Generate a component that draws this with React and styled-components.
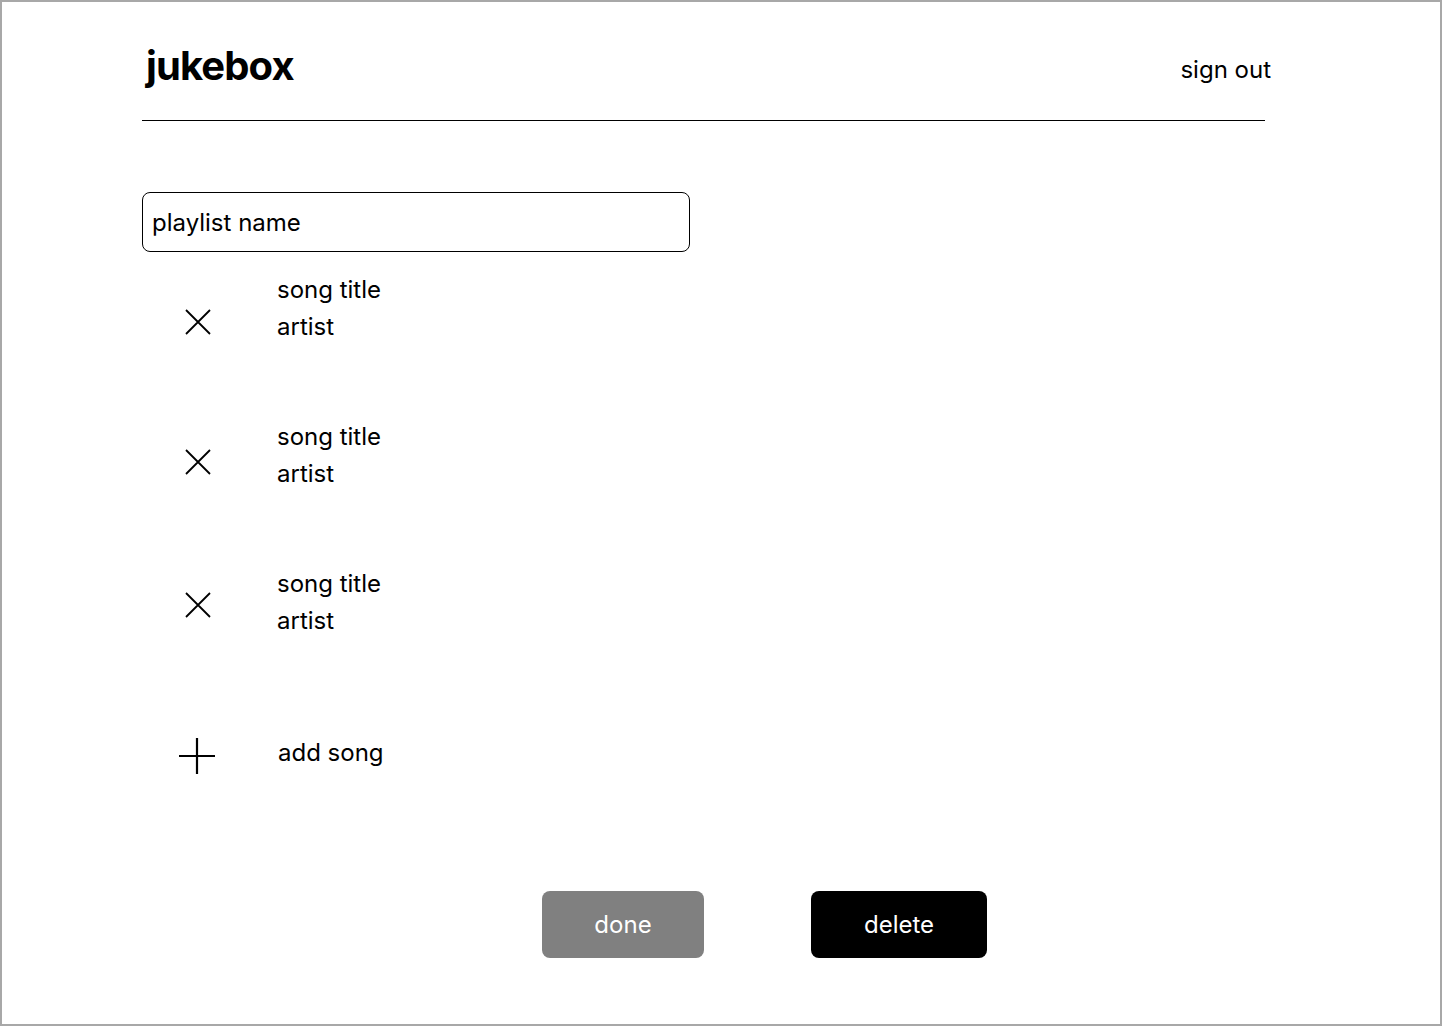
import React from "react";
import styled, { createGlobalStyle } from "styled-components";

const songs = [
  { id: 1, title: "song title", artist: "artist", drop: 38 },
  { id: 2, title: "song title", artist: "artist", drop: 31 },
  { id: 3, title: "song title", artist: "artist", drop: 27 },
];

const CloseIcon = () => (
  <svg width="26" height="26" viewBox="0 0 26 26" fill="none">
    <path d="M1 1L25 25M25 1L1 25" stroke="#000" strokeWidth="1.8" />
  </svg>
);

const PlusIcon = () => (
  <svg width="36" height="36" viewBox="0 0 36 36" fill="none">
    <path d="M18 0V36M0 18H36" stroke="#000" strokeWidth="2.2" />
  </svg>
);

const App = () => {
  return (
    <>
      <GlobalStyle />
      <Frame>
        <Header>
          <Logo>jukebox</Logo>
          <SignOut href="#">sign out</SignOut>
        </Header>
        <Rule />
        <NameInput type="text" defaultValue="playlist name" />
        <SongList>
          {songs.map((song) => (
            <SongRow key={song.id}>
              <RemoveButton type="button" $drop={song.drop} aria-label="remove song">
                <CloseIcon />
              </RemoveButton>
              <SongInfo>
                <SongLine>{song.title}</SongLine>
                <SongLine>{song.artist}</SongLine>
              </SongInfo>
            </SongRow>
          ))}
        </SongList>
        <AddRow>
          <AddIcon>
            <PlusIcon />
          </AddIcon>
          <AddLabel>add song</AddLabel>
        </AddRow>
        <Actions>
          <ActionButton type="button" $tone="#808080" $width={162}>
            done
          </ActionButton>
          <ActionButton type="button" $tone="#000000" $width={176}>
            delete
          </ActionButton>
        </Actions>
      </Frame>
    </>
  );
};

const GlobalStyle = createGlobalStyle`
  * {
    box-sizing: border-box;
  }
  body {
    margin: 0;
    background: #ffffff;
    font-family: Inter, "Liberation Sans", sans-serif;
    color: #000;
  }
`;
const Frame = styled.div`
  width: 1442px;
  height: 1026px;
  border: 2px solid #a8a8a8;
  padding: 40px 0 0 140px;
`;
const Header = styled.header`
  display: flex;
  justify-content: space-between;
  align-items: flex-start;
  width: 1129px;
`;
const Logo = styled.h1`
  margin: 0 0 0 4px;
  font-size: 40px;
  line-height: 48px;
  font-weight: 700;
  letter-spacing: -0.9px;
`;
const SignOut = styled.a`
  margin-top: 13px;
  font-size: 24px;
  line-height: 29px;
  color: #000;
  text-decoration: none;
`;
const Rule = styled.hr`
  width: 1123px;
  height: 1px;
  margin: 30px 0 0;
  border: none;
  background: #000;
`;
const NameInput = styled.input`
  display: block;
  width: 548px;
  height: 60px;
  margin-top: 71px;
  padding: 0 0 0 9px;
  border: 1px solid #000;
  border-radius: 8px;
  font-family: Inter, "Liberation Sans", sans-serif;
  font-size: 24px;
  color: #000;
  outline: none;
`;
const SongList = styled.ul`
  display: flex;
  flex-direction: column;
  gap: 73px;
  margin: 19px 0 0;
  padding: 0;
  list-style: none;
`;
const SongRow = styled.li`
  display: flex;
  align-items: flex-start;
`;
const RemoveButton = styled.button`
  display: flex;
  width: 26px;
  height: 26px;
  margin: ${(p) => p.$drop}px 66px 0 43px;
  padding: 0;
  border: none;
  background: none;
  cursor: pointer;
`;
const SongInfo = styled.div`
  display: flex;
  flex-direction: column;
`;
const SongLine = styled.span`
  font-size: 24px;
  line-height: 37px;
`;
const AddRow = styled.div`
  display: flex;
  align-items: flex-start;
  margin-top: 95px;
`;
const AddIcon = styled.span`
  display: flex;
  margin: 4px 63px 0 37px;
`;
const AddLabel = styled.span`
  font-size: 24px;
  line-height: 37px;
`;
const Actions = styled.div`
  display: flex;
  gap: 107px;
  margin-top: 117px;
  padding-left: 400px;
`;
const ActionButton = styled.button`
  width: ${(p) => p.$width}px;
  height: 67px;
  padding: 0;
  border: none;
  border-radius: 8px;
  background: ${(p) => p.$tone};
  color: #fff;
  font-family: Inter, "Liberation Sans", sans-serif;
  font-size: 24px;
  cursor: pointer;
`;

export default App;
